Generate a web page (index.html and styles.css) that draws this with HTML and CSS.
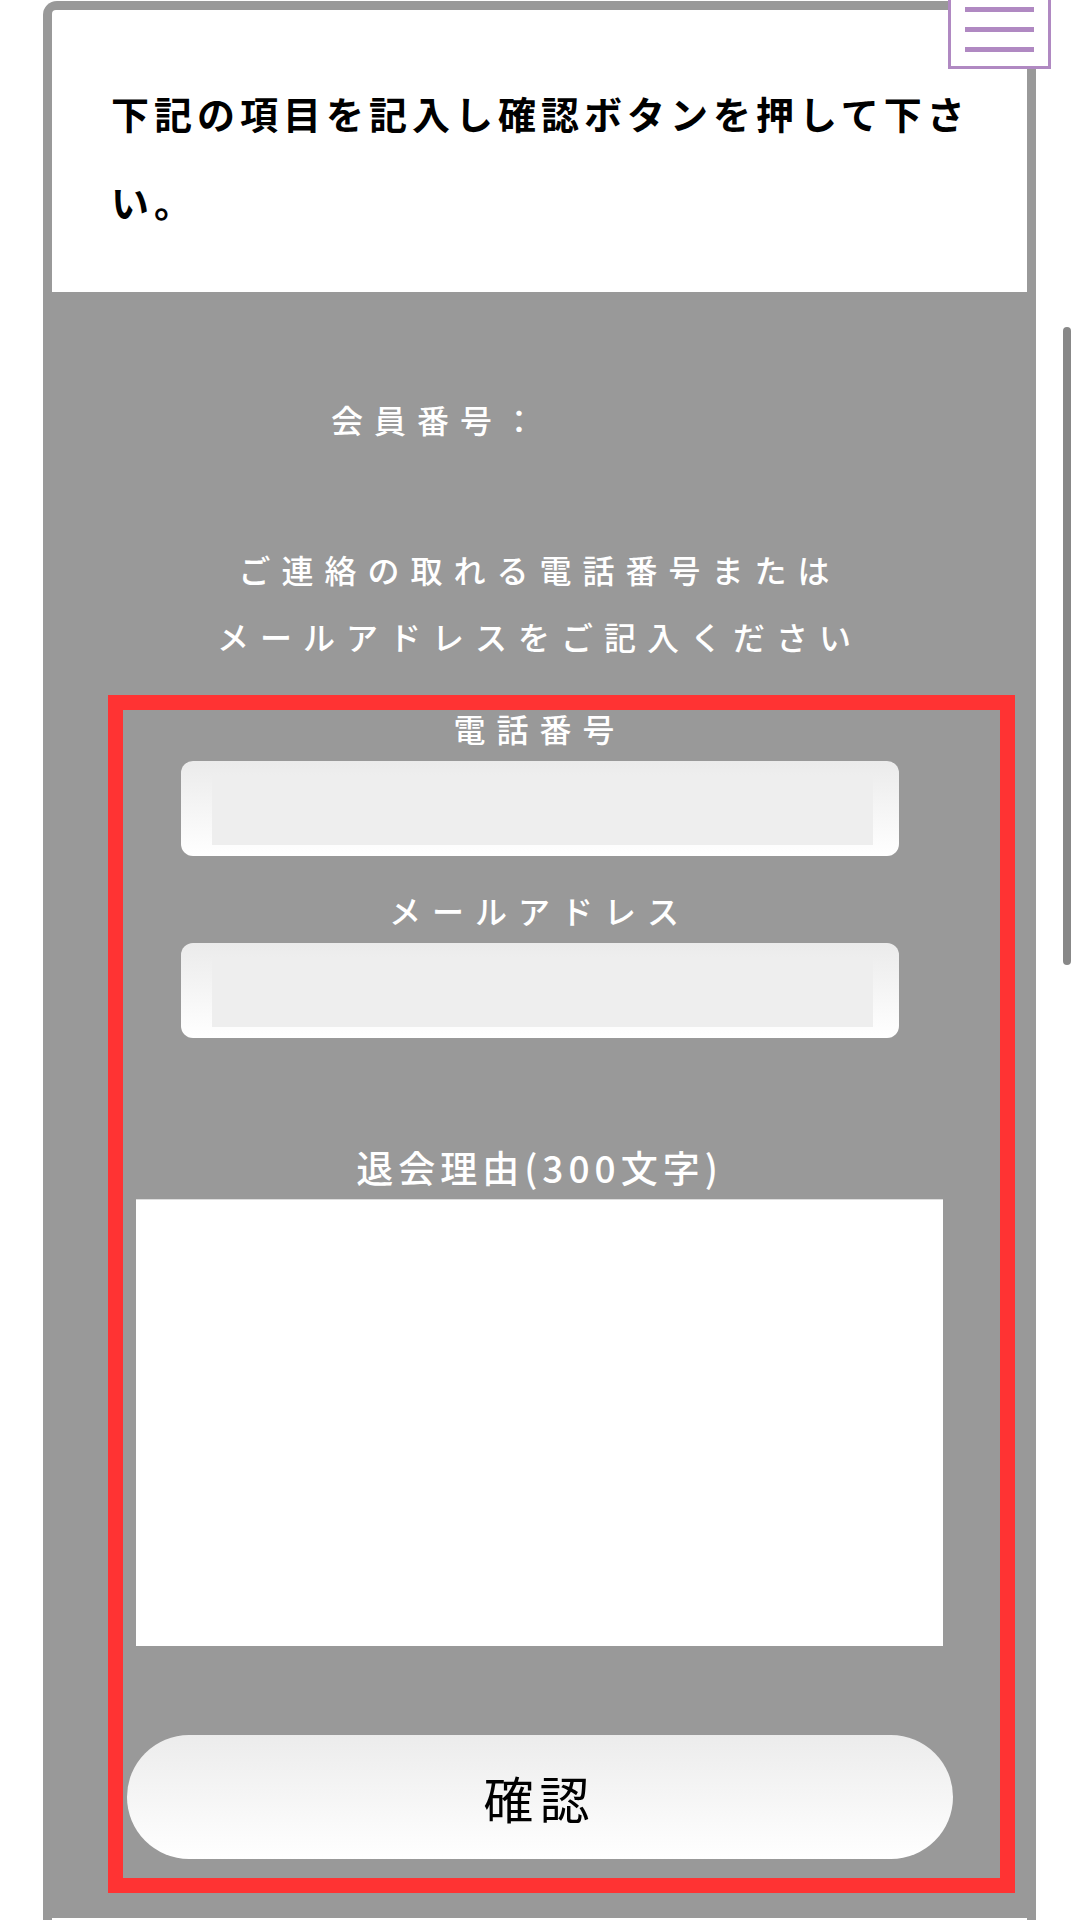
FILE: index.html
```html
<!DOCTYPE html>
<html lang="ja">
<head>
    <meta charset="UTF-8">
    <meta name="viewport" content="width=device-width, initial-scale=1.0">
    <title>退会手続き</title>
    <link rel="stylesheet" href="styles.css">
</head>
<body>
    <button class="menu-button" aria-label="メニュー">
        <span class="menu-line"></span>
        <span class="menu-line"></span>
        <span class="menu-line"></span>
    </button>

    <div class="card">
        <div class="card-header">
            下記の項目を記入し確認ボタンを押して下さい。
        </div>

        <form class="withdraw-form" onsubmit="return false;">
            <p class="member-no">会員番号：</p>

            <p class="notice">
                ご連絡の取れる電話番号または<br>
                メールアドレスをご記入ください
            </p>

            <label class="field-label" for="tel">電話番号</label>
            <span class="field">
                <input class="field-input" type="tel" id="tel">
            </span>

            <label class="field-label field-label-mail" for="mail">メールアドレス</label>
            <span class="field">
                <input class="field-input" type="email" id="mail">
            </span>

            <label class="reason-label" for="reason">退会理由(300文字)</label>
            <textarea class="reason-input" id="reason" maxlength="300"></textarea>

            <button class="confirm-button" type="submit">確認</button>

            <div class="highlight"></div>
        </form>

        <div class="card-footer"></div>
    </div>

    <div class="scroll-thumb"></div>
</body>
</html>
```

FILE: styles.css
```css
html {
    overflow: hidden;
}

body {
    margin: 0;
    width: 1080px;
    background-color: #ffffff;
    font-family: "Noto Sans CJK JP", sans-serif;
}

.card {
    box-sizing: border-box;
    width: 993px;
    margin: 1px 0 0 43px;
    border: 9px solid #999999;
    border-bottom: none;
    border-radius: 14px 14px 0 0;
    background-color: #999999;
}

.card-header {
    padding: 59px 50px 47px 59px;
    background-color: #ffffff;
    border-radius: 4px 4px 0 0;
    color: #000000;
    font-size: 38px;
    font-weight: 700;
    line-height: 88px;
    letter-spacing: 5px;
}

/* gray form area */
.withdraw-form {
    position: relative;
    display: flex;
    flex-direction: column;
    align-items: center;
    padding: 105px 0 59px;
    color: #ffffff;
}

.member-no {
    align-self: flex-start;
    margin: 0 0 0 279px;
    font-size: 32px;
    font-weight: 500;
    line-height: 44px;
    letter-spacing: 11px;
}

.notice {
    margin: 95px 0 0;
    text-align: center;
    font-size: 32px;
    font-weight: 500;
    line-height: 67px;
    letter-spacing: 11px;
}

.field-label {
    margin-top: 36px;
    font-size: 32px;
    font-weight: 500;
    line-height: 44px;
    letter-spacing: 11px;
}

.field-label-mail {
    margin-top: 32px;
}

.field {
    box-sizing: border-box;
    display: block;
    width: 718px;
    height: 95px;
    margin-top: 11px;
    padding: 15px 26px 11px 31px;
    border-radius: 12px;
    background: linear-gradient(#ebebeb, #ffffff);
}

.field-input {
    box-sizing: border-box;
    width: 100%;
    height: 100%;
    border: none;
    background-color: #eeeeee;
    font-size: 30px;
    outline: none;
}

.reason-label {
    margin-top: 104px;
    font-size: 37px;
    font-weight: 500;
    line-height: 50px;
    letter-spacing: 5px;
}

.reason-input {
    box-sizing: border-box;
    width: 807px;
    height: 447px;
    margin-top: 7px;
    border: none;
    border-top: 1px solid #dddddd;
    background-color: #ffffff;
    resize: none;
    font-family: inherit;
    font-size: 30px;
}

.confirm-button {
    width: 826px;
    height: 124px;
    margin-top: 89px;
    border: none;
    border-radius: 62px;
    background: linear-gradient(#ececec, #ffffff);
    color: #000000;
    font-family: inherit;
    font-size: 50px;
    letter-spacing: 6px;
    cursor: pointer;
}

/* red annotation frame over the form */
.highlight {
    position: absolute;
    top: 403px;
    left: 56px;
    box-sizing: border-box;
    width: 907px;
    height: 1198px;
    border: 15px solid #ff3333;
    pointer-events: none;
}

.card-footer {
    height: 120px;
    background-color: #ffffff;
}

.menu-button {
    position: absolute;
    top: -31px;
    left: 948px;
    box-sizing: border-box;
    width: 103px;
    height: 100px;
    display: flex;
    flex-direction: column;
    justify-content: flex-end;
    align-items: center;
    gap: 15px;
    padding: 0 0 14px;
    border: 3px solid #b089c2;
    background-color: #ffffff;
    cursor: pointer;
}

.menu-line {
    display: block;
    width: 69px;
    height: 5px;
    background-color: #b089c2;
}

.scroll-thumb {
    position: fixed;
    top: 327px;
    left: 1063px;
    width: 8px;
    height: 638px;
    border-radius: 4px;
    background-color: #888888;
}
```
